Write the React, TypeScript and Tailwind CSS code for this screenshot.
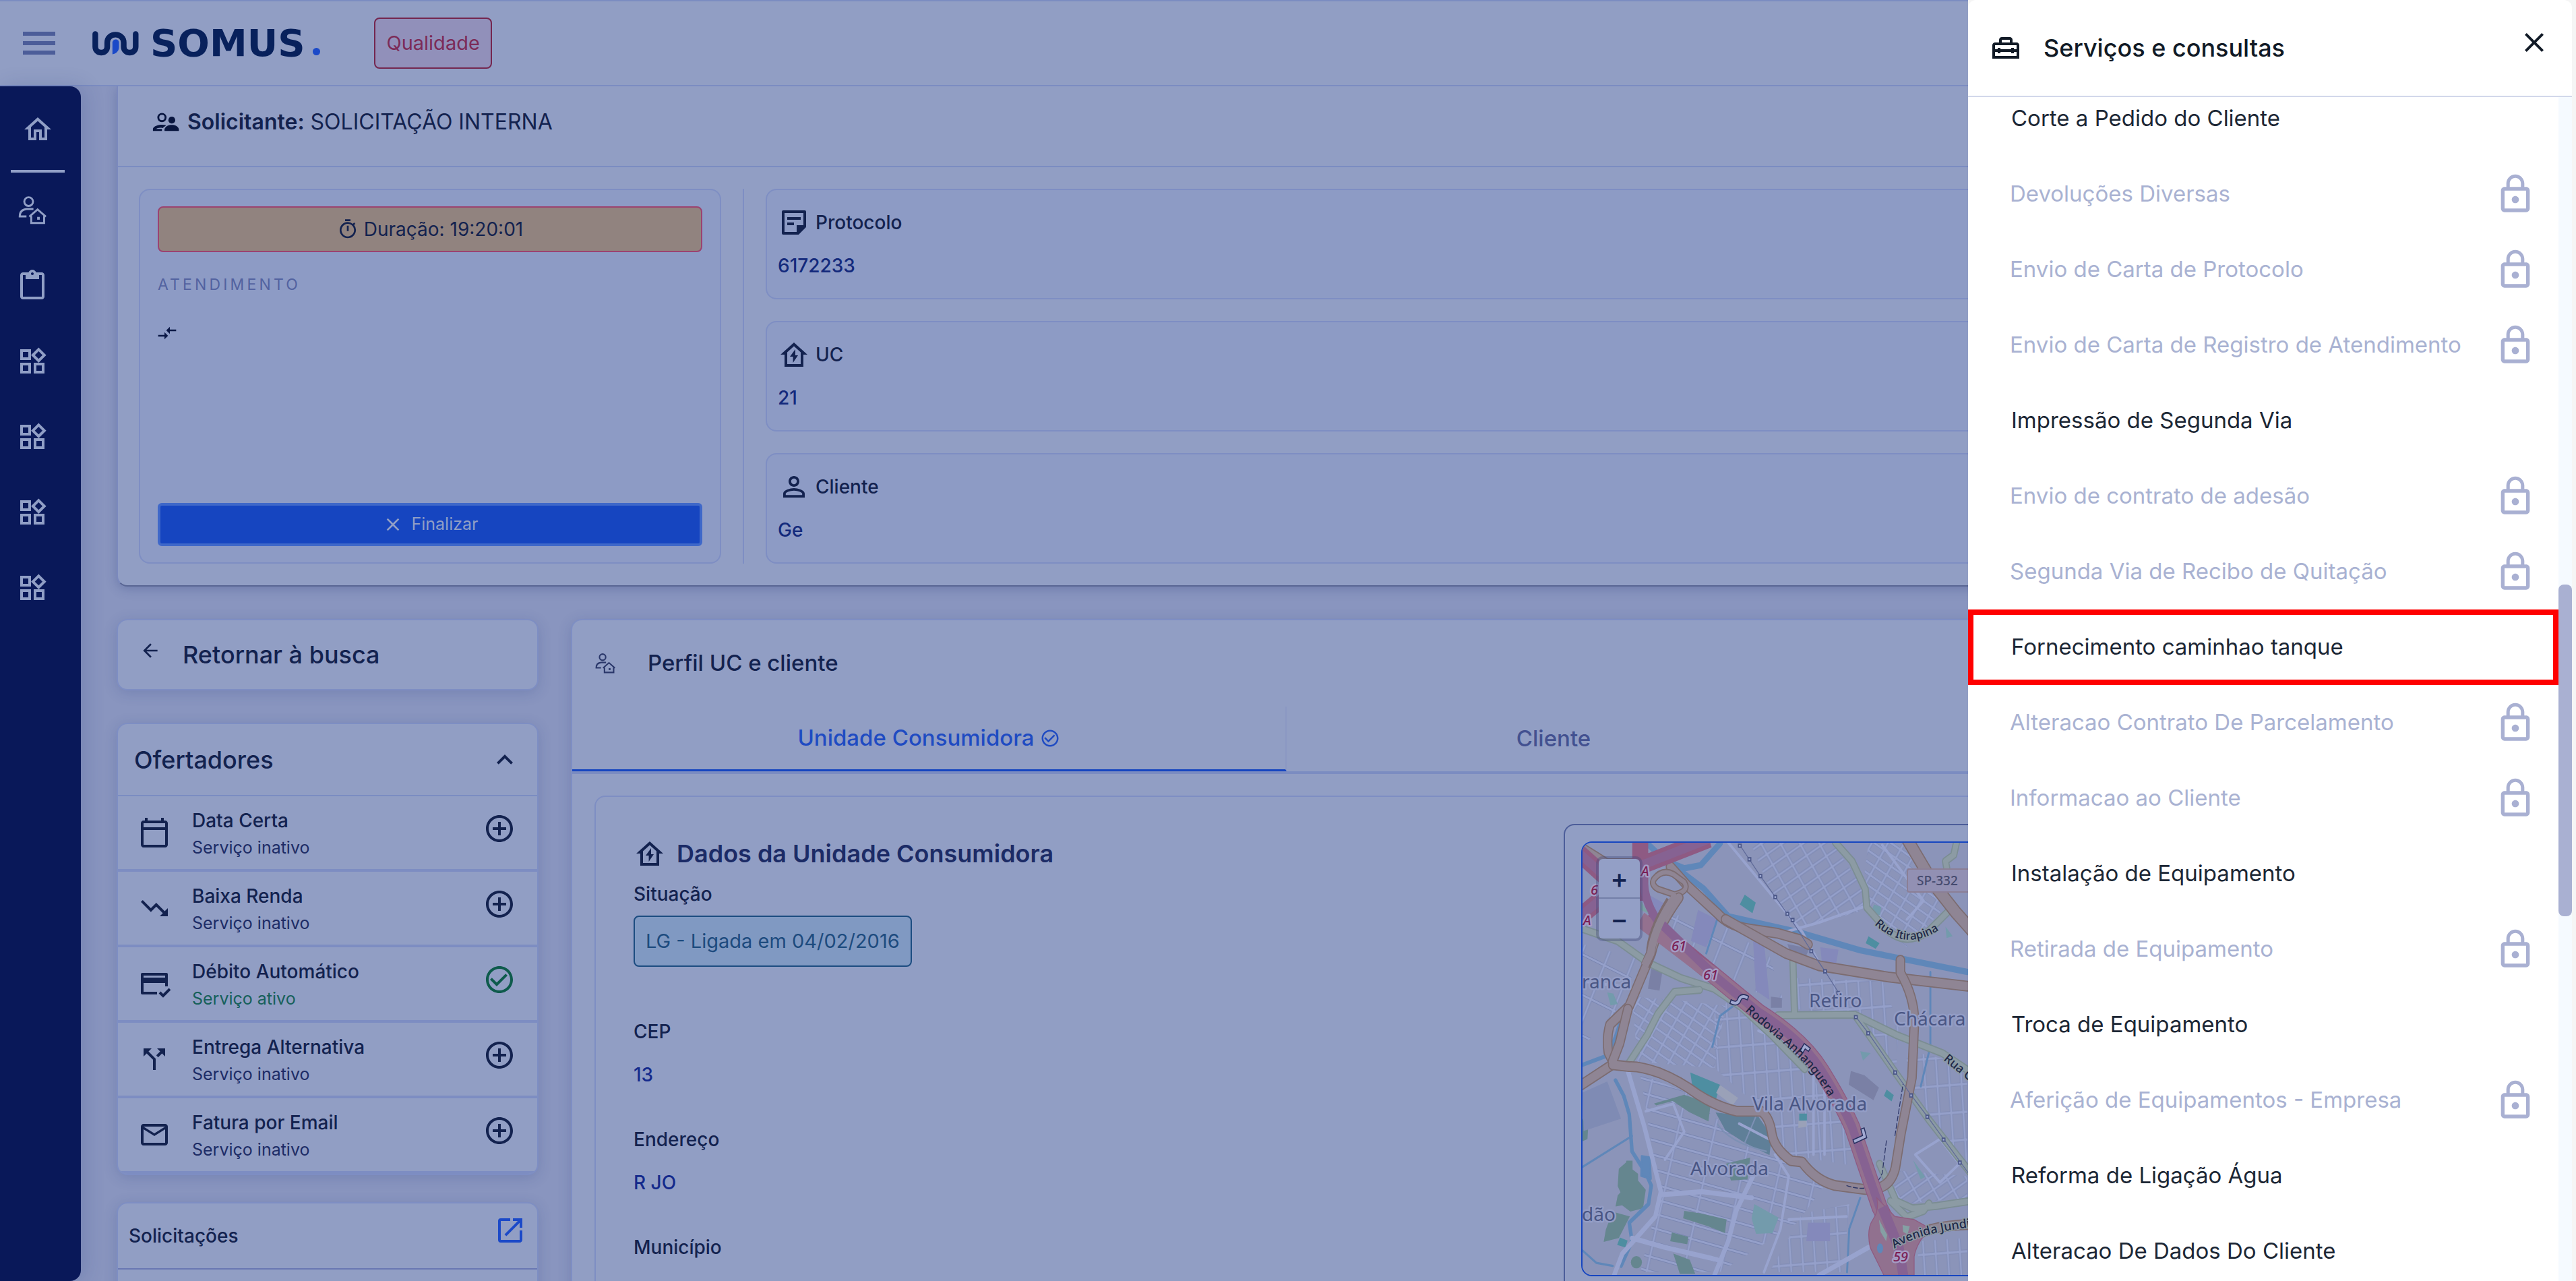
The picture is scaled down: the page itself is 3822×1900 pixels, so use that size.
import React from "react";
import {
  MdAddCircleOutline,
  MdArrowBack,
  MdCallSplit,
  MdCheckCircleOutline,
  MdClose,
  MdCompareArrows,
  MdContentPaste,
  MdKeyboardArrowUp,
  MdLockOutline,
  MdMailOutline,
  MdOpenInNew,
  MdOutlineCalendarToday,
  MdOutlineHome,
  MdOutlineHomeRepairService,
  MdOutlineTimer,
  MdOutlineWidgets,
  MdPersonOutline,
  MdTrendingDown,
} from "react-icons/md";

type IconProps = { className?: string };

function PersonHouseIcon({ className }: IconProps) {
  return (
    <svg viewBox="82 454 128 130" className={className} fill="none" stroke="currentColor" strokeWidth="9" aria-hidden="true">
      <circle cx="129" cy="479" r="20" />
      <path d="M151 513H120Q88 516 88 547H119" />
      <path d="M132 548 170 515l38 33M141 545v32h59v-32" />
      <path d="M168 549h12v13h-12z" fill="currentColor" stroke="none" />
    </svg>
  );
}

function SupervisorIcon({ className }: IconProps) {
  return (
    <svg viewBox="676 82 124 88" className={className} fill="currentColor" aria-hidden="true">
      <circle cx="720" cy="105" r="17" fill="none" stroke="currentColor" strokeWidth="9" />
      <circle cx="766" cy="117" r="16" />
      <path d="M678 168v-11c6-17 42-22 62-16l-17 13c-12-4-26 0-31 4h28v10z" />
      <path d="M732 168v-8c2-15 20-21 34-21s31 6 33 21v8z" />
    </svg>
  );
}

function NoteIcon({ className }: IconProps) {
  return (
    <svg viewBox="0 0 24 24" className={className} fill="none" stroke="currentColor" strokeWidth="2" aria-hidden="true">
      <path d="M4 4h16v11l-5 5H4z" strokeLinejoin="round" />
      <path d="M14 14h7l-7 7z" fill="currentColor" stroke="none" />
      <path d="M7 9h10M7 13h5" />
    </svg>
  );
}

function CardCheckIcon({ className }: IconProps) {
  return (
    <svg viewBox="0 0 24 24" className={className} fill="none" stroke="currentColor" strokeWidth="2" aria-hidden="true">
      <path d="M14 19H3V5h18v9" strokeLinejoin="round" />
      <path d="M3 9.500h18" strokeWidth="4" />
      <path d="M16 18.500l2.500 2.500 5-5" />
    </svg>
  );
}

function HouseBoltIcon({ className }: IconProps) {
  return (
    <svg viewBox="0 0 24 24" className={className} fill="currentColor" aria-hidden="true">
      <path fillRule="evenodd" d="M12 3 2 12h3v9h14v-9h3zM12 5.7l5 4.5V19H7v-8.8z" />
      <path d="M13 8l-4 5.500h2.300V18L15 12.500h-2z" />
    </svg>
  );
}

function LogoMark({ className }: IconProps) {
  return (
    <svg viewBox="50 74 212 116" className={className} fill="none" aria-hidden="true">
      <path
        d="M66 90v56c0 35 53 35 53 0v-18c0-47 73-47 73 0v18c0 35 53 35 53 0V90"
        stroke="#08215c"
        strokeWidth="25"
        strokeLinecap="round"
      />
      <path d="M142 180v-52c0-18 29-20 29 0v20c0 17-11 29-29 32z" fill="#1b49c8" />
    </svg>
  );
}

function Sidebar() {
  const item = "flex size-12 items-center justify-center text-[#919fc6]";
  return (
    <nav aria-label="Principal" className="flex w-[120px] shrink-0 flex-col rounded-r-2xl bg-[#091859] pt-10 shadow-[6px_0_30px_rgba(30,50,120,0.18)]">
      <button className={item + " ml-8"} aria-label="Início">
        <MdOutlineHome className="size-12" />
      </button>
      <div className="mt-9 ml-4 h-1 w-20 bg-[#919fc6]" />
      <div className="mt-8 ml-6 flex flex-col gap-16">
        <button className={item} aria-label="Perfil">
          <PersonHouseIcon className="size-[42px]" />
        </button>
        <button className={item} aria-label="Solicitações">
          <MdContentPaste className="size-12" />
        </button>
        {[1, 2, 3, 4].map((n) => (
          <button key={n} className={item} aria-label={`Módulo ${n}`}>
            <MdOutlineWidgets className="size-12" />
          </button>
        ))}
      </div>
    </nav>
  );
}

function Header() {
  return (
    <header className="flex h-32 shrink-0 items-center border-y-2 border-[#7b8cc1] bg-[#919ec4]">
      <button className="ml-[34px] flex w-12 flex-col gap-[7px]" aria-label="Menu">
        <span className="h-[6px] w-full bg-[#4c5d99]" />
        <span className="my-[1px] h-[6px] w-full bg-[#4c5d99]" />
        <span className="h-[6px] w-full bg-[#4c5d99]" />
      </button>
      <a href="#" className="ml-[54px] flex items-center" aria-label="Somus">
        <LogoMark className="h-[39px] w-[71px]" />
        <span className="ml-4 font-['DejaVu_Sans'] text-[56px] leading-[56px] font-bold text-[#08215c]">SOMUS</span>
        <span className="mt-6 ml-3 size-[11px] rounded-full bg-[#1b49c8]" />
      </a>
      <span className="ml-20 flex h-[76px] items-center rounded-lg border-2 border-[#74264f] bg-[#9190ba] px-4 text-[29px] text-[#7c2b58]">
        Qualidade
      </span>
    </header>
  );
}

const infos = [
  { label: "Protocolo", value: "6172233", Icon: NoteIcon },
  { label: "UC", value: "21", Icon: HouseBoltIcon },
  { label: "Cliente", value: "Ge", Icon: MdPersonOutline },
];

function ServiceCall() {
  return (
    <section className="rounded-b-2xl border-2 border-t-0 border-[#7b89bd] border-b-[#596694] bg-[#919ec4] shadow-[0_4px_16px_rgba(30,50,120,0.25)]">
      <div className="flex h-[120px] items-center gap-3 border-b-2 border-[#7b8cc1] px-[51px] pb-3 text-[32px] text-[#13224f]">
        <SupervisorIcon className="h-7 w-10 text-[#08153f]" />
        <p>
          <strong className="font-semibold">Solicitante:</strong> SOLICITAÇÃO INTERNA
        </p>
      </div>
      <div className="flex px-[31px] py-8">
        <div className="flex w-[864px] shrink-0 flex-col rounded-2xl border-2 border-[#7e8ec3] bg-[#8d9bc5] px-[26px] py-6">
          <p className="flex h-[68px] items-center justify-center gap-2 rounded-lg border-2 border-[#9b4370] bg-[#91837f] text-[28px] text-[#13224f]">
            <MdOutlineTimer className="size-8" />
            Duração: 19:20:01
          </p>
          <p className="mt-8 text-[23px] leading-8 tracking-[0.18em] text-[#5262a0]">ATENDIMENTO</p>
          <MdCompareArrows className="mt-10 -ml-0.5 size-8 text-[#0b1846]" />
          <button className="mt-auto flex h-16 items-center justify-center gap-3 rounded-md border-4 border-[#3f68c9] bg-[#1645c0] text-[25px] text-[#919fc6]">
            <MdClose className="size-8" />
            Finalizar
          </button>
        </div>
        <div className="mx-8 w-0.5 bg-[#7e8ec3]" />
        <dl className="flex flex-1 flex-col gap-8">
          {infos.map(({ label, value, Icon }) => (
            <div key={label} className="rounded-2xl border-2 border-[#7e8ec3] bg-[#8d9bc5] px-4 pt-6 pb-7">
              <dt className="flex items-center gap-2 text-[28px] font-medium text-[#13224f]">
                <Icon className="size-12" />
                {label}
              </dt>
              <dd className="mt-5 text-[28px] leading-10 font-medium text-[#142a7c]">{value}</dd>
            </div>
          ))}
        </dl>
      </div>
    </section>
  );
}

const offers = [
  { title: "Data Certa", active: false, Icon: MdOutlineCalendarToday },
  { title: "Baixa Renda", active: false, Icon: MdTrendingDown },
  { title: "Débito Automático", active: true, Icon: CardCheckIcon },
  { title: "Entrega Alternativa", active: false, Icon: MdCallSplit },
  { title: "Fatura por Email", active: false, Icon: MdMailOutline },
];

const card = "rounded-2xl border-2 border-[#7e8ec3] bg-[#919ec4] shadow-[0_4px_20px_rgba(30,50,120,0.18)]";

function LeftColumn() {
  return (
    <div className="flex w-[626px] shrink-0 flex-col gap-10 text-[#13224f]">
      <button className={card + " mb-2 flex h-[106px] items-center gap-8 pl-8 text-left text-4xl font-medium"}>
        <MdArrowBack className="mb-3 size-8" />
        Retornar à busca
      </button>
      <section className={card + " overflow-hidden"}>
        <button className="flex h-[107px] w-full items-center justify-between border-b-2 border-[#7b8cc1] pr-6 pl-6 text-4xl font-medium">
          Ofertadores
          <MdKeyboardArrowUp className="size-12" />
        </button>
        <ul>
          {offers.map(({ title, active, Icon }) => (
            <li key={title} className="flex h-28 items-start border-b-4 border-[#7d8dc2] pr-8 pl-[30px]">
              <Icon className="mt-[30px] size-12" />
              <div className="mt-4 ml-8 flex-1">
                <h3 className="text-[28px] leading-10 font-medium">{title}</h3>
                <p className={active ? "text-[25px] leading-10 text-[#16605a]" : "text-[25px] leading-10 text-[#1d2c66]"}>
                  {active ? "Serviço ativo" : "Serviço inativo"}
                </p>
              </div>
              <button className="mt-6" aria-label={title}>
                {active ? <MdCheckCircleOutline className="size-12 text-[#0e5b4c]" /> : <MdAddCircleOutline className="size-12" />}
              </button>
            </li>
          ))}
        </ul>
      </section>
      <section className={card}>
        <div className="flex h-[98px] items-center justify-between border-b-2 border-[#6977b3] pr-4 pl-4">
          <h2 className="text-[28px] font-medium">Solicitações</h2>
          <a href="#" aria-label="Abrir solicitações">
            <MdOpenInNew className="mb-4 size-12 text-[#1b49c8]" />
          </a>
        </div>
        <div className="h-32" />
      </section>
    </div>
  );
}

/* Street blocks: polygon plus the street pattern that fills it. */
const blocks: [string, string][] = [
  ["690,640 900,860 1060,1020 1130,1200 860,1160 790,1010 700,960 600,880 600,700", "url(#gridA)"],
  ["730,150 1030,152 1140,300 1150,370 900,430 800,300", "url(#gridB)"],
  ["1160,152 1300,152 1450,350 1300,490 1180,400 1140,290", "url(#gridC)"],
  ["900,590 1210,600 1270,740 1260,900 1110,710 900,690", "url(#gridA)"],
  ["330,900 500,960 600,1040 800,1150 1000,1260 900,1380 620,1540 330,1540 400,1290", "url(#gridD)"],
  ["1290,820 1519,870 1519,1220 1330,980", "url(#gridA)"],
  ["1240,1210 1519,1230 1519,1300 1270,1320", "url(#gridB)"],
  ["300,650 450,660 640,680 600,880 320,860", "url(#gridC)"],
  ["920,1350 1090,1320 1070,1540 800,1540", "url(#gridA)"],
  ["400,380 600,400 800,520 860,690 600,560 400,450", "url(#gridE)"],
  ["120,480 330,530 250,680 200,760 120,800", "url(#gridE)"],
  ["1340,1440 1519,1430 1519,1550 1340,1550", "url(#gridA)"],
];

function Road({ d, casing, fill, width }: { d: string; casing: string; fill: string; width: number }) {
  return (
    <g fill="none" strokeLinejoin="round" strokeLinecap="round">
      <path d={d} stroke={casing} strokeWidth={width + 8} />
      <path d={d} stroke={fill} strokeWidth={width} />
    </g>
  );
}

function CityMap() {
  const patterns: [string, number, number, number][] = [
    ["gridA", 44, 90, -4],
    ["gridB", 60, 40, -32],
    ["gridC", 50, 32, 32],
    ["gridD", 130, 46, 14],
    ["gridE", 90, 120, 24],
  ];
  const orange = { casing: "#7c6c70", fill: "#8f8594", width: 27 };
  const green = { casing: "#7b8d93", fill: "#8c9ba4", width: 18 };
  const halo = { stroke: "#939dc6", strokeWidth: 5, paintOrder: "stroke" as const, strokeLinejoin: "round" as const };
  return (
    <svg className="block h-full w-full font-['Noto_Sans']" role="img" aria-label="Mapa da região">
      <defs>
        {patterns.map(([id, w, h, angle]) => (
          <pattern key={id} id={id} width={w} height={h} patternUnits="userSpaceOnUse" patternTransform={`rotate(${angle})`}>
            <path d={`M0 ${h / 2}H${w}M${w / 2} 0V${h}`} stroke="#7985b0" strokeWidth="11" fill="none" />
            <path d={`M0 ${h / 2}H${w}M${w / 2} 0V${h}`} stroke="#95a0ca" strokeWidth="7" fill="none" />
          </pattern>
        ))}
        <path id="rodovia" d="M241 249C285 290 330 315 366 378" />
        <path id="itirapina" d="M433 121Q480 164 534 126" />
        <path id="ruag" d="M535 322L600 375" />
        <path id="jundiai" d="M463 602Q505 574 620 566" />
      </defs>
      <rect width="100%" height="100%" fill="#8b94b9" />
      <g transform="matrix(.408 0 0 .459 -49 -70)">
        {blocks.map(([points, fill]) => (
          <polygon key={points} points={points} fill={fill} />
        ))}
        <g fill="#65868f">
          <path d="M280 1180h22v28l20 14v22l28 30-10 60-46 10-30-20-24 4 8-36 10-10-10-20 4-56 26-20zM230 1345l62 15-40 70-55 12 8-40zM490 1342l60 8 94 20-6 44-60-22-92-26zM445 1412l60 14-4 24-62-10zM118 1040l22 40-2 30-20 8zM380 995l110-28 96 30-8 56-70-30-60-36-60 14z" />
          <circle cx="316" cy="1508" r="20" />
          <path d="M450 1480l60 20 20 46h-56zM640 1190l90-20-10 70-60 4z" />
        </g>
        <path d="M604 1024l90 10 66 4 48 62-8 62-90-40-70-40z" fill="#5f7f98" />
        <path d="M750 1038l-40 84M610 1060q40 60 180 90" stroke="#7d90b4" strokeWidth="5" fill="none" />
        <g fill="#4e8ea1">
          <path d="M512 895l110 40-18 50-82-30zM710 320l40 26-12 34-46-28zM1160 455l40 22-14 18-36-18zM1226 950l26 18-8 20-28-18zM908 1028h28v22h-28zM256 1428l28 10-8 22-30-8z" />
        </g>
        <path d="M745 1320l88 44-22 50-60 2-16-50zM1322 1178l44 54-16 8zM210 636l22 4 16 34-26 4zM1180 352l26 8-4 26-34-6zM1440 424l26 30-22 6zM1130 826l38 6-28 24z" fill="#739bac" />
        <path d="M620 935l66 42-20 24-60-40zM905 1052l30-2v20l-30 4z" fill="#9aa1b8" />
        <path d="M540 370l70 30-40 90-56-20zM740 460l40 10 20 190-50-30zM985 490l66 8-10 50-50-6zM940 1380h80v60h-86zM360 320l80 40-40 50z" fill="#8489bb" />
        <path d="M370 560l40 10-10 60-42-6zM865 480l80 14-20 40-40-4zM1096 890l50 14 52 40-20 40-90-50zM805 650l40 4v32h-40z" fill="#7a80a5" />
        <path d="M120 960l90-36 50 120-136 40z" fill="#7f8bb4" />

        <g fill="none" stroke="#5f87b9" strokeLinecap="round" strokeLinejoin="round">
          <path d="M350 150l70 60 70 25 60-10 70-70" strokeWidth="20" />
          <path d="M470 240l90 60 90 90 250 50 230 60 390 70" strokeWidth="20" />
          <path d="M270 700l-30 80-30 60-90 30M240 920l30 50 20 60 10 120 50 70 20 40-10 60-70 60 10 60-40 80" strokeWidth="13" />
          <path d="M300 1100l-90 50-90 50M120 1470l50 40 60 10M680 672l-60 40-28 100M1385 570v240l-35 130M1130 1300l-40 100-8 140M610 400l-40 110" strokeWidth="7" />
          <path d="M335 1165l30 4 4 70-36-10z" fill="#5f87b9" strokeWidth="6" />
        </g>

        <g fill="none" stroke="#98a3ce" strokeLinejoin="round" strokeLinecap="round">
          <path d="M285 890l60 180 60 210-20 80-120 120-30 70M300 1430l120 30 190 40M740 1230l-60 110-30 100-50 110M405 1290l150-10 180 20M1160 1460l-120 60-60 30" strokeWidth="16" />
          <path d="M650 152l270 290 80 130M860 440l120-30 160-50M120 600l170 20M350 1020l100-24 40 90-70 90M820 1160l50 70-30 170-60 140M870 1370l210-10M690 1060l130 60M760 760l200 70M1000 900v260M960 900v260M1210 160l150 180-60 60" strokeWidth="9" />
          <path d="M1330 1160l90 90 70-60-70-80z" strokeWidth="9" />
        </g>

        <Road d="M118 430l130 40 110 70 120 50 120 34 100 60 110 90 120 110" {...green} />
        <Road d="M545 628l-90 6-60 70-40 70-66 90" {...green} />
        <Road d="M885 530l6 178M830 710l280-2 150 65 170 60 100 60M1110 708l150 190 120 150 150 170" {...green} />
        <Road d="M1040 152l60 60 48 90 6 60 60 60q70 70 160 20l90-80M1480 152l-10 40-30 20 10 50 80 30" {...green} />
        <Road d="M1200 1190l60 120 60 24 90-8 120-16M1240 1310l60 52 60-20 20-24" {...green} />

        <Road d="M118 170l90 50 110 0 230-70M440 230l60 60M500 290l110 90q40 40 110 50l110 15 80 20 30 16" {...orange} />
        <Road d="M380 270q30-34 70-16l40 26q20 30-36 40l-60-18q-26-14-14-32z" {...orange} width={14} />
        <Road d="M640 400q80 40 220 110l120 40 250 36 290 30" {...orange} />
        <Road d="M470 330q-80 100-100 180l-80 170-70 60q-14 40-6 90l20 36-120 70" {...orange} />
        <Road d="M285 690l-30 110-26 60M230 870l60 6q40-2 110 20 70 24 140 70 70 40 140 54l90 0q30 20 38 70t70 90l40 4q50 60 120 76l100 12q100 10 120-70l20-110 40-180 8-160q8-90-50-180v-40" {...orange} />
        <Road d="M1300 140l100 150 80 90 60 60" {...orange} width={36} />
        <path d="M1080 1260q100 30 130-40l16-110M1256 1100l30-170" stroke="#2c3566" strokeWidth="3" fill="none" strokeDasharray="18 6" />
        <Road d="M1300 1440q60-50 230-54" {...orange} />

        <g fill="none" strokeLinejoin="round">
          <path d="M100 180l100 80 150-40 230-80M100 400l80-60M330 150v190M350 400l260 190 150 110q160 90 230 190t110 180l100 260 80 140" stroke="#8e5a83" strokeWidth="58" strokeLinecap="butt" />
          <path d="M330 400l280 190 150 110q160 90 230 190t110 180l100 260 80 140" stroke="#94718f" strokeWidth="52" />
          <path d="M100 180l100 80 150-40 230-80M100 400l80-60 140-130M340 240q0 100 50 160l220 190 150 110q160 90 230 190t110 180l100 260 80 140" stroke="#866292" strokeWidth="30" />
        </g>
        <path d="M1190 1300q10 40-14 70t-10 90l50 90h110v-60q10-50 60-90l-60-30-70-10z" fill="#91718f" stroke="#8f5b80" strokeWidth="3" />
        <path d="M1210 1330l60 130 20 110" stroke="#866292" strokeWidth="36" fill="none" />
        <path d="M1198 1370l30 50-4 20-20-30zM1284 1388l26 4-8 26-16-8z" fill="#85a0a4" />
        <ellipse cx="1202" cy="1463" rx="11" ry="16" fill="#5f87b9" />
        <path d="M332 340l28 40-28-10z" fill="#7ba0a4" />
        <path d="M440 340q-70 100-72 170l-20 40" stroke="#7c6c70" strokeWidth="34" fill="none" />
        <path d="M462 320q-80 100-94 190l-22 40" stroke="#8f8594" strokeWidth="27" fill="none" />

        <path d="M692 160l75 100 98 122 44 60 43 60 50 66 50 70M1114 715l45 52 98 127 58 74 60 70 60 74 90 110" stroke="#5f6a99" strokeWidth="3" fill="none" />
        <g fill="#9aa5cf" stroke="#4b5788" strokeWidth="4">
          {[[692, 162], [727, 206], [767, 260], [821, 328], [865, 382], [884, 402], [952, 503], [1002, 568], [1050, 638], [1114, 716], [1159, 768], [1257, 895], [1315, 969], [1374, 1038], [1433, 1112], [1492, 1186]].map(([x, y]) => (
            <path key={x} d={`M${x - 5} ${y - 5}h10v10h-10z`} />
          ))}
        </g>
        <g fill="none" strokeLinecap="square">
          <path d="M664 668q20 8 26-8t26-8M920 822l8-12 12 8M1112 1116l34-14-6-20" stroke="#27305f" strokeWidth="16" />
          <path d="M664 668q20 8 26-8t26-8M920 822l8-12 12 8M1112 1116l34-14-6-20" stroke="#a3aad2" strokeWidth="9" />
        </g>
      </g>

      <g fontSize="28" fill="#4a5684" {...halo}>
        <text x="-1" y="216">ranca</text>
        <text x="336" y="244">Retiro</text>
        <text x="462" y="271">Chácara</text>
        <text x="252" y="397">Vila Alvorada</text>
        <text x="160" y="493">Alvorada</text>
        <text x="-1" y="561">dão</text>
      </g>
      <g fontSize="20" fill="#7c1f55" fontStyle="italic" fontWeight="500" {...halo} stroke="#a59cc4">
        <text x="132" y="160">61</text>
        <text x="179" y="203">61</text>
        <text x="461" y="621">59</text>
        <text x="87" y="49">A</text>
        <text x="1" y="122">A</text>
        <text x="12" y="77">6</text>
      </g>
      <g fontSize="18" fill="#1e2748" fontWeight="500">
        <text>
          <textPath href="#rodovia">Rodovia Anhanguera</textPath>
        </text>
        <g stroke="#8c9ba4" strokeWidth="3" paintOrder="stroke">
          <text fontSize="17">
            <textPath href="#itirapina">Rua Itirapina</textPath>
          </text>
          <text>
            <textPath href="#ruag">Rua Graff</textPath>
          </text>
          <text>
            <textPath href="#jundiai">Avenida Jundiaí</textPath>
          </text>
        </g>
      </g>
      <rect x="482" y="39" width="110" height="34" rx="3" fill="#9290b3" stroke="#8b7f96" strokeWidth="2" />
      <text x="496" y="63" fontSize="19" fontWeight="500" fill="#454a6e">
        SP-332
      </text>
    </svg>
  );
}

const address = [
  { label: "CEP", value: "13" },
  { label: "Endereço", value: "R JO" },
  { label: "Município", value: "" },
];

function Profile() {
  const zoom = "flex h-[59px] w-full items-center justify-center text-[40px] leading-none font-medium";
  return (
    <section className={card + " flex-1 text-[#13224f]"}>
      <div className="flex h-32 items-center gap-12 pl-[34px]">
        <PersonHouseIcon className="size-[30px] text-[#2a376a]" />
        <h2 className="text-[33px] font-medium">Perfil UC e cliente</h2>
      </div>
      <div role="tablist" className="flex border-b-4 border-[#7b8cc1]">
        <button
          role="tab"
          aria-selected="true"
          className="flex h-24 w-[1060px] items-center justify-center gap-2 border-r-2 border-b-[3px] border-r-[#8b98c3] border-b-[#1645c0] text-[33px] font-medium text-[#1f4bc2]"
        >
          Unidade Consumidora
          <MdCheckCircleOutline className="size-[30px]" />
        </button>
        <button role="tab" aria-selected="false" className="h-24 w-[792px] text-[33px] font-medium text-[#435190]">
          Cliente
        </button>
      </div>
      <div className="mx-[33px] mt-8 flex rounded-2xl border-2 border-[#7e8ec3]">
        <div className="w-[1436px] shrink-0 pt-[60px] pl-14">
          <h3 className="flex items-center gap-4 text-4xl leading-[48px] font-semibold text-[#1c2b66]">
            <HouseBoltIcon className="size-12 text-[#13224f]" />
            Dados da Unidade Consumidora
          </h3>
          <p className="mt-4 text-[28px] leading-10 font-medium">Situação</p>
          <p className="mt-3 inline-flex h-[76px] items-center rounded-lg border-2 border-[#1c4c80] bg-[#8099c2] px-4 text-[29px] text-[#1d4b7e]">
            LG - Ligada em 04/02/2016
          </p>
          <dl className="mt-[76px] flex flex-col gap-14">
            {address.map(({ label, value }) => (
              <div key={label}>
                <dt className="text-[28px] leading-10 font-medium">{label}</dt>
                <dd className="mt-6 h-10 text-[28px] leading-10 font-medium text-[#142a8c]">{value}</dd>
              </div>
            ))}
          </dl>
        </div>
        <div className="mt-10 mr-10 flex-1 rounded-2xl border-2 border-[#4c5d99] p-6">
          <div className="relative h-[645px] overflow-hidden rounded-2xl border-2 border-[#1645c0]">
            <CityMap />
            <div className="absolute top-6 left-6 w-[61px] rounded-md bg-[#939fc6] shadow-[0_0_0_4px_rgba(60,70,120,0.35)]">
              <button className={zoom + " border-b-2 border-[#737fa8]"}>+</button>
              <button className={zoom}>−</button>
            </div>
          </div>
        </div>
      </div>
    </section>
  );
}

type Service = { name: string; locked?: boolean; marked?: boolean };
const services: Service[] = [
  { name: "Corte a Pedido do Cliente" },
  { name: "Devoluções Diversas", locked: true },
  { name: "Envio de Carta de Protocolo", locked: true },
  { name: "Envio de Carta de Registro de Atendimento", locked: true },
  { name: "Impressão de Segunda Via" },
  { name: "Envio de contrato de adesão", locked: true },
  { name: "Segunda Via de Recibo de Quitação", locked: true },
  { name: "Fornecimento caminhao tanque", marked: true },
  { name: "Alteracao Contrato De Parcelamento", locked: true },
  { name: "Informacao ao Cliente", locked: true },
  { name: "Instalação de Equipamento" },
  { name: "Retirada de Equipamento", locked: true },
  { name: "Troca de Equipamento" },
  { name: "Aferição de Equipamentos - Empresa", locked: true },
  { name: "Reforma de Ligação Água" },
  { name: "Alteracao De Dados Do Cliente" },
];

function ServiceRow({ name, locked, marked }: Service) {
  if (marked) {
    return (
      <button className="flex h-28 w-full items-center border-8 border-[#ff0000] pl-14 text-left text-[#1c2735]">{name}</button>
    );
  }
  return (
    <button
      disabled={locked}
      className={
        locked
          ? "flex h-28 w-full items-center justify-between pr-8 pl-[62px] text-left text-[#a9b2d2]"
          : "flex h-28 w-full items-center pl-16 text-left text-[#1c2735]"
      }
    >
      {name}
      {locked && <MdLockOutline className="size-16 text-[#a9b0d2]" />}
    </button>
  );
}

function ServicesDrawer() {
  return (
    <aside role="dialog" aria-label="Serviços e consultas" className="fixed inset-y-0 right-0 flex w-[902px] bg-[#f5f5f5] pr-[6px]">
      <div className="flex min-w-0 flex-1 flex-col rounded-t-xl bg-white">
        <div className="flex h-36 shrink-0 items-center gap-8 border-b-2 border-[#d2d8ea] px-8">
          <MdOutlineHomeRepairService className="size-12 text-[#111a26]" />
          <h2 className="flex-1 text-4xl font-medium text-[#111a26]">Serviços e consultas</h2>
          <button aria-label="Fechar" className="mb-4">
            <MdClose className="size-12 text-[#111a26]" />
          </button>
        </div>
        <div className="flex min-h-0 flex-1 overflow-hidden">
          <ul className="-mt-6 flex-1 text-[33px]">
            {services.map((s) => (
              <li key={s.name}>
                <ServiceRow {...s} />
              </li>
            ))}
          </ul>
          <div className="flex w-5 flex-col bg-[#f5faff]">
            <div className="h-[41.2%]" />
            <div className="h-[28%] rounded-lg bg-[#a9b0d2]" />
          </div>
        </div>
      </div>
    </aside>
  );
}

export default function App() {
  return (
    <div className="flex h-screen flex-col overflow-hidden bg-[#8995bf] font-['Inter',sans-serif]">
      <Header />
      <div className="flex min-h-0 flex-1">
        <Sidebar />
        <main className="min-w-0 flex-1 overflow-hidden pr-12 pl-[53px]">
          <ServiceCall />
          <div className="mt-12 flex gap-12">
            <LeftColumn />
            <Profile />
          </div>
        </main>
      </div>
      <ServicesDrawer />
    </div>
  );
}
